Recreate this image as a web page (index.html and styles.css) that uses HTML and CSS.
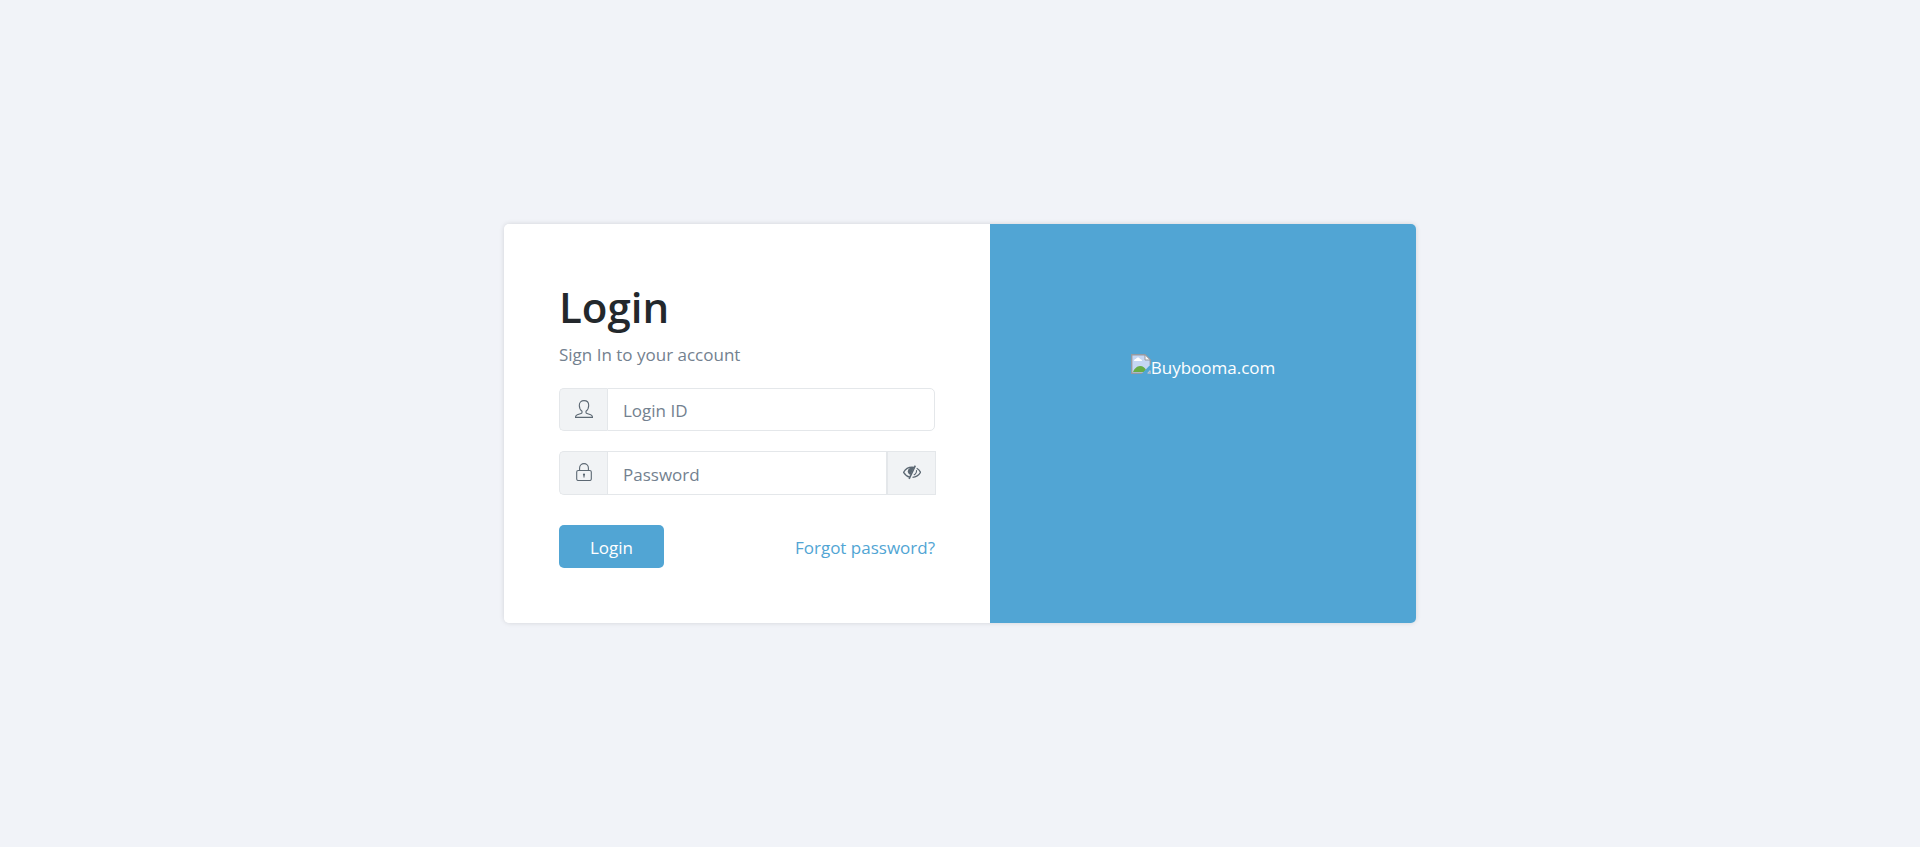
FILE: index.html
```html
<!DOCTYPE html>
<html lang="en">
<head>
<meta charset="utf-8">
<meta name="viewport" content="width=device-width, initial-scale=1">
<title>Login</title>
<link rel="stylesheet" href="styles.css">
</head>
<body>
<main class="card-group">
  <section class="login-card">
    <form class="login-form">
      <h1 class="title">Login</h1>
      <p class="subtitle">Sign In to your account</p>
      <div class="input-group">
        <label class="addon addon-start" for="login-id" aria-label="Login ID">
          <svg class="icon" viewBox="0 0 18 18" aria-hidden="true"><path d="M9 .6C6.300.6 4.300 2.500 4.300 5.300c0 2.400 1 4.800 2.700 6v1.100c0 .7-.4.9-1 1.100l-3.700 1.200C1 15.100.5 15.700.5 17.400h17c0-1.700-.5-2.300-1.800-2.700L12 13.500c-.6-.2-1-.4-1-1.100v-1.100c1.700-1.200 2.700-3.600 2.700-6C13.700 2.500 11.700.6 9 .6z"/></svg>
        </label>
        <input class="field field-end" id="login-id" type="text" placeholder="Login ID">
      </div>
      <div class="input-group input-group-password">
        <label class="addon addon-start" for="password" aria-label="Password">
          <svg class="icon" viewBox="0 0 18 18" aria-hidden="true"><rect x="1.700" y="7.500" width="14.600" height="10" rx="1.500"/><path d="M4.600 7.500V5a4.400 4.400 0 0 1 8.800 0v2.500M9 12v2.500"/><circle class="solid" cx="9" cy="11.600" r="1.100"/></svg>
        </label>
        <input class="field" id="password" type="password" placeholder="Password">
        <button class="addon toggle" type="button" aria-label="Show password">
          <svg class="icon" viewBox="0 0 18 18" aria-hidden="true"><path class="bold" d="M6.800 14.200C4.200 13.500 2 11.700.6 9.300 2.500 6 5.700 4.200 9 4.200l2.200.2M13.700 5.200C15.400 6.100 16.700 7.600 17.500 9.300c-1.700 3-4.600 4.800-8 5"/><path class="solid" d="M10.900 4.800C8 3.800 4.800 5.500 4.800 8.300c0 1.800 1 3.100 2.500 3.700z"/><path class="slash" d="M12.300 2.600 6.100 15.800"/><path d="M13.500 7.200c.3 2-.9 3.900-2.700 4.900"/></svg>
        </button>
      </div>
      <div class="actions">
        <button class="submit" type="submit">Login</button>
        <a class="forgot" href="#">Forgot password?</a>
      </div>
    </form>
  </section>
  <section class="brand-card">
    <div class="brand">
      <svg class="broken-image" viewBox="0 0 20 20" aria-hidden="true"><path fill="#c5d7f3" d="M1 1h13l5 5v13H1z"/><path fill="#fff" d="M3 7c0-1.500 1-2 2-2 .5-2 3.500-2 4 0 1.500 0 2 1 2 2z"/><path fill="#68ad45" d="M2 18c1-3 4-6 7-6 3 0 5 2 6 4l-2 2z"/><path fill="none" stroke="#979aa0" stroke-width="1.400" d="M14 .7H.7v18.600H12M14 .7l5.300 5.300v5"/><path fill="#f8f8f8" stroke="#979aa0" d="M14 .7V6h5.300z"/><path fill="#51a5d4" d="M20 10 10.500 20h5L20 15z"/><path fill="#a5b7c9" d="m16 20 4-4v4z"/></svg><span>Buybooma.com</span>
    </div>
  </section>
</main>
</body>
</html>
```
FILE: styles.css
```css
* {
  box-sizing: border-box;
}

body {
  display: flex;
  align-items: center;
  justify-content: center;
  min-height: 100vh;
  margin: 0;
  background: #f1f3f8;
  color: #23282c;
  font: 17px/27px "Segoe UI", "Open Sans", "Noto Sans", sans-serif;
}

.card-group {
  display: grid;
  grid-template-columns: 486fr 426fr;
  width: 100%;
  max-width: 912px;
  border-radius: 5px;
  box-shadow: 0 0 5px rgba(0, 0, 0, 0.13);
}

.login-card {
  min-width: 0;
  padding: 55px;
  border-radius: 5px 0 0 5px;
  background: #fff;
}

.brand-card {
  min-width: 0;
  padding: 130px 24px;
  border-radius: 0 5px 5px 0;
  background: #51a5d4;
  color: #fff;
}

.title {
  margin: 0 0 6px;
  font-size: 42px;
  font-weight: 600;
  line-height: 56px;
}

.subtitle {
  margin: 0 0 20px;
  color: #73818f;
}

.input-group {
  display: flex;
  height: 43px;
  margin-bottom: 20px;
}

.input-group-password {
  height: 44px;
  margin-right: -1px;
  margin-bottom: 30px;
}

.addon {
  display: flex;
  flex: none;
  align-items: center;
  justify-content: center;
  width: 50px;
  padding: 0 0 2px;
  border: 1px solid #e4e7ea;
  background: #f1f3f5;
  color: #5c6873;
}

.addon-start {
  width: 48px;
  border-right: 0;
  border-radius: 5px 0 0 5px;
}

.toggle {
  border-left-width: 2px;
}

.field {
  flex: 1;
  min-width: 0;
  padding: 2px 15px 0;
  border: 1px solid #e4e7ea;
  background: #fff;
  color: #5c6873;
  font: inherit;
}

.input-group-password .field {
  border-right: 0;
}

.field-end {
  border-radius: 0 5px 5px 0;
}

.field::placeholder {
  color: #73818f;
  opacity: 1;
}

.icon {
  width: 18px;
  height: 18px;
  fill: none;
  stroke: currentColor;
  stroke-width: 1.1;
}

.icon .solid {
  fill: currentColor;
  stroke: none;
}

.icon .bold {
  stroke-width: 1.3;
}

.icon .slash {
  stroke-width: 1.6;
}

.actions {
  display: flex;
  align-items: center;
  justify-content: space-between;
}

.submit {
  height: 43px;
  padding: 2px 31px 0;
  border: 0;
  border-radius: 5px;
  background: #51a5d4;
  color: #fff;
  font: inherit;
}

.forgot {
  padding-top: 2px;
  color: #51a5d4;
  text-decoration: none;
}

.brand {
  display: flex;
  justify-content: center;
}

.broken-image {
  width: 20px;
  height: 20px;
}
```
